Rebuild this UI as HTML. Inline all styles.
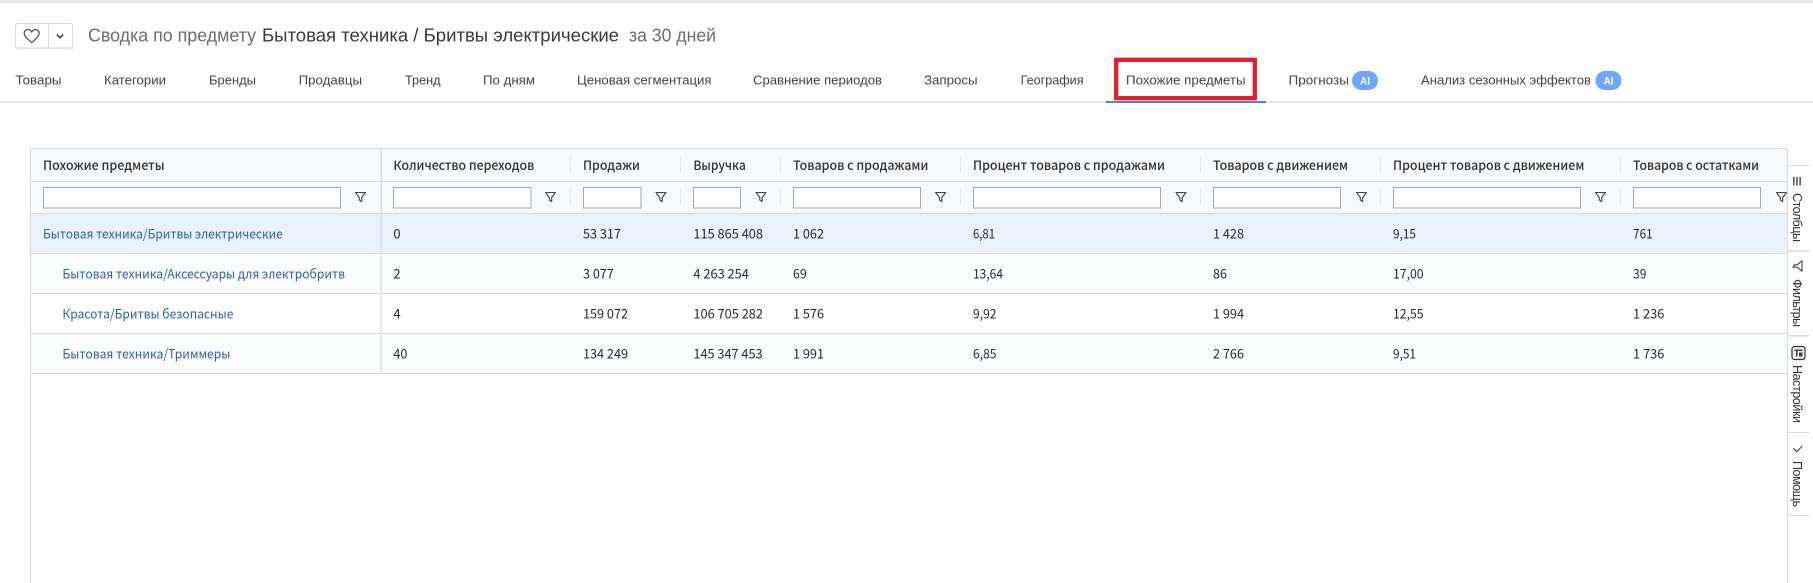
<!DOCTYPE html>
<html lang="ru"><head><meta charset="utf-8"><title>Сводка</title>
<style>html,body{margin:0;padding:0;background:#fff;width:1813px;height:583px;overflow:hidden}svg{display:block}
.t{font-family:"Liberation Sans",sans-serif;font-size:13px;fill:#444}
.n{font-family:"Noto Sans CJK JP","Liberation Sans",sans-serif;font-size:13px;fill:#2a2a2a}
.h{font-family:"Noto Sans CJK JP","Liberation Sans",sans-serif;font-size:13px;fill:#333;font-weight:500}
.l{font-family:"Noto Sans CJK JP","Liberation Sans",sans-serif;font-size:13px;fill:#2d5fbe}
.s{font-family:"Liberation Sans",sans-serif;font-size:12.5px;fill:#333}
.i{fill:#fff;stroke:#a3a9ab;stroke-width:1}
.f{fill:none;stroke:#444;stroke-width:1.1;stroke-linejoin:round}
</style></head><body>
<svg xmlns="http://www.w3.org/2000/svg" width="1813" height="583" viewBox="0 0 1813 583">
<rect width="1813" height="583" fill="#fff"/>
<rect width="1813" height="3.5" fill="#e9e9e9"/>
<!-- fav button -->
<rect x="16" y="48" width="57" height="1.5" fill="#ececec"/>
<rect x="15.5" y="23.5" width="57" height="24.5" rx="2" fill="#fff" stroke="#dcdcdc"/>
<rect x="48" y="24" width="1" height="24" fill="#dcdcdc"/>
<path d="M31.7 42.5C27 38.5 24.2 36.2 24.2 33.2C24.2 30.9 26 29.6 27.8 29.6C29.5 29.6 30.9 30.5 31.7 32C32.5 30.5 33.9 29.6 35.6 29.6C37.4 29.6 39.2 30.9 39.2 33.2C39.2 36.2 36.4 38.5 31.7 42.5Z" fill="none" stroke="#444" stroke-width="1.1"/>
<path d="M56.8 34.6L60 37.8L63.2 34.6" fill="none" stroke="#444" stroke-width="1.6"/>
<!-- title -->
<text x="88" y="41.5" font-family="Liberation Sans,sans-serif" font-size="18" fill="#6e6e6e" textLength="168" lengthAdjust="spacingAndGlyphs">Сводка по предмету</text>
<text x="262" y="41.5" font-family="Liberation Sans,sans-serif" font-size="18" fill="#3a3a3a" textLength="357" lengthAdjust="spacingAndGlyphs">Бытовая техника / Бритвы электрические</text>
<text x="629" y="41.5" font-family="Liberation Sans,sans-serif" font-size="18" fill="#6e6e6e" textLength="87" lengthAdjust="spacingAndGlyphs">за 30 дней</text>
<!-- tabs -->
<rect y="101" width="1813" height="2" fill="#e8e8e8"/>
<rect x="1106" y="101" width="160" height="2" fill="#5585c9"/>
<g class="t">
<text x="15.5" y="84.5" textLength="46" lengthAdjust="spacingAndGlyphs">Товары</text>
<text x="104" y="84.5" textLength="62" lengthAdjust="spacingAndGlyphs">Категории</text>
<text x="209" y="84.5" textLength="47" lengthAdjust="spacingAndGlyphs">Бренды</text>
<text x="298.6" y="84.5" textLength="63.4" lengthAdjust="spacingAndGlyphs">Продавцы</text>
<text x="405" y="84.5" textLength="35.6" lengthAdjust="spacingAndGlyphs">Тренд</text>
<text x="483" y="84.5" textLength="52" lengthAdjust="spacingAndGlyphs">По дням</text>
<text x="577" y="84.5" textLength="134.6" lengthAdjust="spacingAndGlyphs">Ценовая сегментация</text>
<text x="753" y="84.5" textLength="129" lengthAdjust="spacingAndGlyphs">Сравнение периодов</text>
<text x="924" y="84.5" textLength="53.6" lengthAdjust="spacingAndGlyphs">Запросы</text>
<text x="1020.6" y="84.5" textLength="63" lengthAdjust="spacingAndGlyphs">География</text>
<text x="1126" y="84.5" textLength="119.6" lengthAdjust="spacingAndGlyphs">Похожие предметы</text>
<text x="1288.5" y="84.5" textLength="60.5" lengthAdjust="spacingAndGlyphs">Прогнозы</text>
<text x="1421" y="84.5" textLength="170" lengthAdjust="spacingAndGlyphs">Анализ сезонных эффектов</text>
</g>
<rect x="1352" y="71" width="26" height="19" rx="9.5" fill="#6ea6fb"/>
<text x="1360" y="84.5" font-family="Liberation Sans,sans-serif" font-size="11" font-weight="700" fill="#fff" textLength="10" lengthAdjust="spacingAndGlyphs">AI</text>
<rect x="1595.5" y="71" width="26" height="19" rx="9.5" fill="#6ea6fb"/>
<text x="1603.5" y="84.5" font-family="Liberation Sans,sans-serif" font-size="11" font-weight="700" fill="#fff" textLength="10" lengthAdjust="spacingAndGlyphs">AI</text>
<rect x="1116.2" y="59.8" width="138.6" height="38.4" fill="none" stroke="#e0202c" stroke-width="4.3"/>
<!-- table backgrounds -->
<rect x="30" y="148" width="1757" height="65" fill="#f8f9fb"/>
<rect x="30" y="213" width="1757" height="40" fill="#e9f1fd"/>
<rect x="30" y="253" width="1757" height="40" fill="#fbfcfe"/>
<rect x="30" y="333" width="1757" height="40" fill="#fbfcfe"/>
<!-- table lines -->
<g fill="#d8dbdf">
<rect x="30" y="148" width="1757" height="1"/>
<rect x="30" y="181" width="1757" height="1"/>
<rect x="30" y="213" width="1757" height="1"/>
<rect x="30" y="253" width="1757" height="1"/>
<rect x="30" y="293" width="1757" height="1"/>
<rect x="30" y="333" width="1757" height="1"/>
<rect x="30" y="373" width="1757" height="1"/>
<rect x="30" y="148" width="1" height="435"/>
<rect x="1787" y="148" width="1" height="435"/>
</g>
<g fill="#dcdfe3">
<rect x="380.5" y="149" width="1.5" height="32"/>
<rect x="380.5" y="182" width="1.5" height="31"/>
<rect x="380.5" y="214" width="1.5" height="39"/>
<rect x="380.5" y="255" width="1.5" height="37"/>
<rect x="380.5" y="295" width="1.5" height="37"/>
<rect x="380.5" y="335" width="1.5" height="37"/>
</g>
<g fill="#e6e8ea">
<rect x="570" y="157" width="1" height="16"/><rect x="570" y="189" width="1" height="16"/>
<rect x="680" y="157" width="1" height="16"/><rect x="680" y="189" width="1" height="16"/>
<rect x="780" y="157" width="1" height="16"/><rect x="780" y="189" width="1" height="16"/>
<rect x="960" y="157" width="1" height="16"/><rect x="960" y="189" width="1" height="16"/>
<rect x="1200" y="157" width="1" height="16"/><rect x="1200" y="189" width="1" height="16"/>
<rect x="1380" y="157" width="1" height="16"/><rect x="1380" y="189" width="1" height="16"/>
<rect x="1620" y="157" width="1" height="16"/><rect x="1620" y="189" width="1" height="16"/>
</g>
<!-- headers -->
<g class="h">
<text x="43" y="170" textLength="121.6" lengthAdjust="spacingAndGlyphs">Похожие предметы</text>
<text x="393.4" y="170" textLength="140.8" lengthAdjust="spacingAndGlyphs">Количество переходов</text>
<text x="583" y="170" textLength="57" lengthAdjust="spacingAndGlyphs">Продажи</text>
<text x="693.4" y="170" textLength="52.4" lengthAdjust="spacingAndGlyphs">Выручка</text>
<text x="793" y="170" textLength="135.4" lengthAdjust="spacingAndGlyphs">Товаров с продажами</text>
<text x="973" y="170" textLength="192" lengthAdjust="spacingAndGlyphs">Процент товаров с продажами</text>
<text x="1213" y="170" textLength="135" lengthAdjust="spacingAndGlyphs">Товаров с движением</text>
<text x="1393" y="170" textLength="191.3" lengthAdjust="spacingAndGlyphs">Процент товаров с движением</text>
<text x="1633" y="170" textLength="126" lengthAdjust="spacingAndGlyphs">Товаров с остатками</text>
</g>
<!-- filter inputs -->
<rect class="i" x="43.5" y="187.5" width="297" height="20.5"/>
<rect class="i" x="393.5" y="187.5" width="137.5" height="20.5"/>
<rect class="i" x="583.5" y="187.5" width="57.5" height="20.5"/>
<rect class="i" x="693.5" y="187.5" width="47" height="20.5"/>
<rect class="i" x="793.5" y="187.5" width="127" height="20.5"/>
<rect class="i" x="973.5" y="187.5" width="187" height="20.5"/>
<rect class="i" x="1213.5" y="187.5" width="127" height="20.5"/>
<rect class="i" x="1393.5" y="187.5" width="187" height="20.5"/>
<rect class="i" x="1633.5" y="187.5" width="127" height="20.5"/>
<!-- filter icons -->
<g class="f">
<path transform="translate(360.5 197)" d="M-5-4.5H5L1.2.5V4.5L-1.2 3V.5Z"/>
<path transform="translate(550.5 197)" d="M-5-4.5H5L1.2.5V4.5L-1.2 3V.5Z"/>
<path transform="translate(661 197)" d="M-5-4.5H5L1.2.5V4.5L-1.2 3V.5Z"/>
<path transform="translate(761 197)" d="M-5-4.5H5L1.2.5V4.5L-1.2 3V.5Z"/>
<path transform="translate(940.6 197)" d="M-5-4.5H5L1.2.5V4.5L-1.2 3V.5Z"/>
<path transform="translate(1181 197)" d="M-5-4.5H5L1.2.5V4.5L-1.2 3V.5Z"/>
<path transform="translate(1361.5 197)" d="M-5-4.5H5L1.2.5V4.5L-1.2 3V.5Z"/>
<path transform="translate(1600.5 197)" d="M-5-4.5H5L1.2.5V4.5L-1.2 3V.5Z"/>
<path transform="translate(1781.5 197)" d="M-5-4.5H5L1.2.5V4.5L-1.2 3V.5Z"/>
</g>
<!-- links -->
<g class="l">
<text x="43" y="238.5" textLength="239.8" lengthAdjust="spacingAndGlyphs">Бытовая техника/Бритвы электрические</text>
<text x="62.4" y="278.5" textLength="282.6" lengthAdjust="spacingAndGlyphs">Бытовая техника/Аксессуары для электробритв</text>
<text x="62.4" y="318.5" textLength="171" lengthAdjust="spacingAndGlyphs">Красота/Бритвы безопасные</text>
<text x="62.4" y="358.5" textLength="168" lengthAdjust="spacingAndGlyphs">Бытовая техника/Триммеры</text>
</g>
<!-- numbers -->
<g class="n">
<text x="393.4" y="238.5">0</text><text x="393.4" y="278.5">2</text><text x="393.4" y="318.5">4</text><text x="393.4" y="358.5" textLength="14" lengthAdjust="spacingAndGlyphs">40</text>
<text x="583" y="238.5" textLength="38" lengthAdjust="spacingAndGlyphs">53 317</text><text x="583" y="278.5" textLength="30.8" lengthAdjust="spacingAndGlyphs">3 077</text><text x="583" y="318.5" textLength="45" lengthAdjust="spacingAndGlyphs">159 072</text><text x="583" y="358.5" textLength="45" lengthAdjust="spacingAndGlyphs">134 249</text>
<text x="693.4" y="238.5" textLength="69.6" lengthAdjust="spacingAndGlyphs">115 865 408</text><text x="693.4" y="278.5" textLength="55.5" lengthAdjust="spacingAndGlyphs">4 263 254</text><text x="693.4" y="318.5" textLength="69.6" lengthAdjust="spacingAndGlyphs">106 705 282</text><text x="693.4" y="358.5" textLength="69.2" lengthAdjust="spacingAndGlyphs">145 347 453</text>
<text x="793" y="238.5" textLength="31" lengthAdjust="spacingAndGlyphs">1 062</text><text x="793" y="278.5" textLength="13.7" lengthAdjust="spacingAndGlyphs">69</text><text x="793" y="318.5" textLength="31" lengthAdjust="spacingAndGlyphs">1 576</text><text x="793" y="358.5" textLength="31" lengthAdjust="spacingAndGlyphs">1 991</text>
<text x="973" y="238.5" textLength="22" lengthAdjust="spacingAndGlyphs">6,81</text><text x="973" y="278.5" textLength="30" lengthAdjust="spacingAndGlyphs">13,64</text><text x="973" y="318.5" textLength="23.5" lengthAdjust="spacingAndGlyphs">9,92</text><text x="973" y="358.5" textLength="23.5" lengthAdjust="spacingAndGlyphs">6,85</text>
<text x="1213" y="238.5" textLength="31" lengthAdjust="spacingAndGlyphs">1 428</text><text x="1213" y="278.5" textLength="14" lengthAdjust="spacingAndGlyphs">86</text><text x="1213" y="318.5" textLength="31" lengthAdjust="spacingAndGlyphs">1 994</text><text x="1213" y="358.5" textLength="31" lengthAdjust="spacingAndGlyphs">2 766</text>
<text x="1393" y="238.5" textLength="23" lengthAdjust="spacingAndGlyphs">9,15</text><text x="1393" y="278.5" textLength="30.6" lengthAdjust="spacingAndGlyphs">17,00</text><text x="1393" y="318.5" textLength="30.6" lengthAdjust="spacingAndGlyphs">12,55</text><text x="1393" y="358.5" textLength="23" lengthAdjust="spacingAndGlyphs">9,51</text>
<text x="1633" y="238.5" textLength="19.7" lengthAdjust="spacingAndGlyphs">761</text><text x="1633" y="278.5" textLength="13.4" lengthAdjust="spacingAndGlyphs">39</text><text x="1633" y="318.5" textLength="31.4" lengthAdjust="spacingAndGlyphs">1 236</text><text x="1633" y="358.5" textLength="31.4" lengthAdjust="spacingAndGlyphs">1 736</text>
</g>
<!-- side panel -->
<rect x="1788" y="148" width="25" height="435" fill="#fff"/>
<g fill="#d8dbdf">
<rect x="1787" y="165" width="22" height="1"/>
<rect x="1787" y="250" width="22" height="1.5"/>
<rect x="1787" y="335" width="22" height="1.5"/>
<rect x="1787" y="432" width="22" height="1"/>
<rect x="1787" y="515" width="22" height="1"/>
</g>
<g fill="#222">
<rect x="1793.3" y="177" width="1.2" height="8.5"/><rect x="1796.4" y="177" width="1.2" height="8.5"/><rect x="1799.5" y="177" width="1.2" height="8.5"/>
</g>
<g class="s">
<text transform="translate(1793 193) rotate(90)" textLength="49" lengthAdjust="spacing">Столбцы</text>
<text transform="translate(1793 279) rotate(90)" textLength="48" lengthAdjust="spacing">Фильтры</text>
<text transform="translate(1793 365) rotate(90)" textLength="58" lengthAdjust="spacing">Настройки</text>
<text transform="translate(1793 461) rotate(90)" textLength="46" lengthAdjust="spacing">Помощь</text>
</g>
<path transform="translate(1797.5 266) rotate(90)" d="M-5-4.5H5L1.2.5V4.5L-1.2 3V.5Z" fill="none" stroke="#444" stroke-width="1.1"/>
<rect x="1792" y="346.5" width="13" height="13" rx="2.5" fill="#ececec" stroke="#333" stroke-width="1.2"/>
<path d="M1794.5 349.5h8v1.5h-5v5.5h-1.5v-5.5h-1.5zM1799 352.5h3.5v4h-3.5z" fill="#444"/>
<path d="M1793.3 448.3L1796.7 451.7L1802.3 446" fill="none" stroke="#444" stroke-width="1.1"/>
</svg>
</body></html>
